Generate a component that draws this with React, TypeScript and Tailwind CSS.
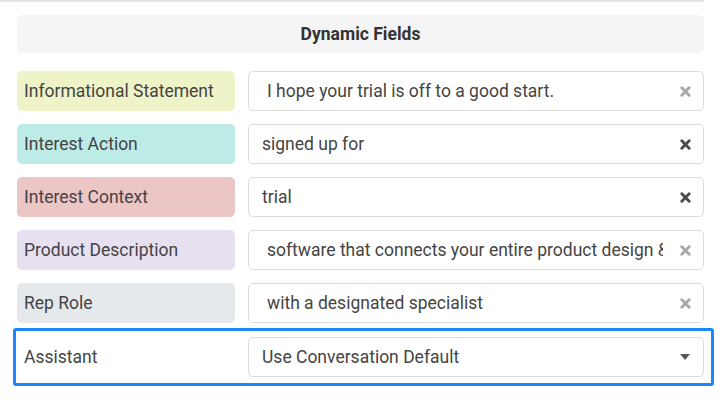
import React from 'react';

type Field = {
  label: string;
  value: string;
  bg: string;
  indent: boolean;
  dark: boolean;
};

const fields: Field[] = [
  { label: 'Informational Statement', value: 'I hope your trial is off to a good start.', bg: 'bg-[#eff3c8]', indent: true, dark: false },
  { label: 'Interest Action', value: 'signed up for', bg: 'bg-[#bdebe5]', indent: false, dark: true },
  { label: 'Interest Context', value: 'trial', bg: 'bg-[#ecc5c5]', indent: false, dark: true },
  { label: 'Product Description', value: 'software that connects your entire product design & development workflow', bg: 'bg-[#e7e0f1]', indent: true, dark: false },
  { label: 'Rep Role', value: 'with a designated specialist', bg: 'bg-[#e5e9ec]', indent: true, dark: false },
];

function ClearIcon({ dark }: { dark: boolean }) {
  return (
    <svg width="11" height="11" viewBox="0 0 12 12" className="shrink-0">
      <path
        d="M2 2 L10 10 M10 2 L2 10"
        stroke={dark ? '#4a4a4a' : '#a8a8a8'}
        strokeWidth="3.2"
        strokeLinecap="round"
      />
    </svg>
  );
}

function FieldRow({ f }: { f: Field }) {
  return (
    <div className="flex h-[40px] gap-[13px]">
      <div className={`w-[218px] shrink-0 rounded-[5px] ${f.bg} flex items-center px-[7px] text-[17.5px] text-[#444]`}>
        {f.label}
      </div>
      <div className="flex-1 min-w-0 rounded-[5px] border border-[#dcdcdc] bg-white flex items-center pl-[13px] pr-[12px] gap-[17px]">
        <span className={`flex-1 min-w-0 overflow-hidden whitespace-nowrap text-[17.5px] text-[#444] ${f.indent ? 'pl-[5px]' : ''}`}>
          {f.value}
        </span>
        <ClearIcon dark={f.dark} />
      </div>
    </div>
  );
}

export default function App() {
  return (
    <div className="w-[723px] h-[416px] bg-white overflow-hidden font-['Roboto',sans-serif]">
      <div className="h-[2px] w-[704px] bg-[#e4e4e4]" />
      <div className="pl-[17px] pr-[19px] pt-[13px]">
        <div className="h-[38px] rounded-[5px] bg-[#f5f5f5] flex items-center justify-center text-[17.5px] font-bold text-[#333]">
          Dynamic Fields
        </div>
        <div className="mt-[18px] flex flex-col gap-[13px]">
          {fields.map((f) => (
            <FieldRow key={f.label} f={f} />
          ))}
        </div>
      </div>
      <div className="ml-[13px] w-[701px] mt-[5px] border-[3px] border-[#1a87ff] rounded-[3px] py-[6px] pl-[1px] pr-[7px] flex gap-[13px]">
        <div className="w-[218px] shrink-0 h-[40px] flex items-center px-[7px] text-[17.5px] text-[#444]">
          Assistant
        </div>
        <div className="flex-1 h-[40px] rounded-[5px] border border-[#dcdcdc] bg-white flex items-center justify-between pl-[13px] pr-[13px]">
          <span className="text-[17.5px] text-[#444]">Use Conversation Default</span>
          <svg width="10" height="6" viewBox="0 0 10 6">
            <path d="M0 0 L10 0 L5 6 Z" fill="#555" />
          </svg>
        </div>
      </div>
    </div>
  );
}
